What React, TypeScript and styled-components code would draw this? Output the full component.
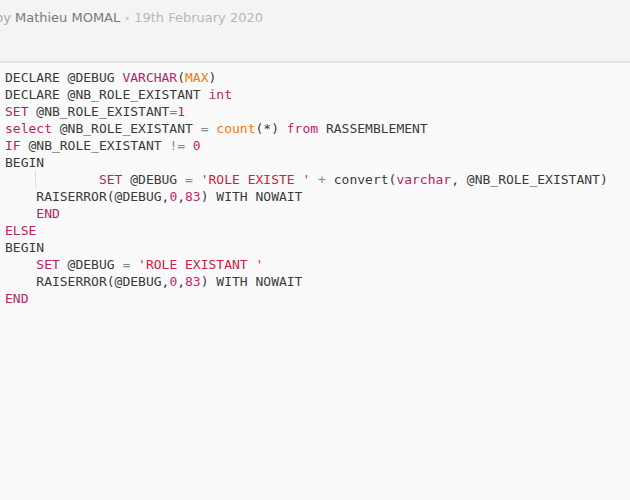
import React from 'react';
import styled, { createGlobalStyle } from 'styled-components';

const GlobalStyle = createGlobalStyle`
  html, body {
    margin: 0;
    padding: 0;
    background: #fafafa;
    overflow: hidden;
  }
`;

type Tok = [string, string?];

// k = keyword, f = function, s = string, n = number, o = operator
const lines: Tok[][] = [
  [['DECLARE @DEBUG '], ['VARCHAR', 'k'], ['('], ['MAX', 'f'], [')']],
  [['DECLARE @NB_ROLE_EXISTANT '], ['int', 'k']],
  [['SET', 'k'], [' @NB_ROLE_EXISTANT'], ['=', 'o'], ['1', 'n']],
  [['select', 'k'], [' @NB_ROLE_EXISTANT '], ['=', 'o'], [' '], ['count', 'f'], ['(*) '], ['from', 'k'], [' RASSEMBLEMENT']],
  [['IF', 'k'], [' @NB_ROLE_EXISTANT '], ['!=', 'o'], [' '], ['0', 'n']],
  [['BEGIN']],
  [['            '], ['SET', 'k'], [' @DEBUG '], ['=', 'o'], [' '], ["'ROLE EXISTE '", 's'], [' '], ['+', 'o'], [' convert('], ['varchar', 'k'], [', @NB_ROLE_EXISTANT)']],
  [['    RAISERROR(@DEBUG,'], ['0', 'n'], [','], ['83', 'n'], [') WITH NOWAIT']],
  [['    '], ['END', 'k']],
  [['ELSE', 'k']],
  [['BEGIN']],
  [['    '], ['SET', 'k'], [' @DEBUG '], ['=', 'o'], [' '], ["'ROLE EXISTANT '", 's']],
  [['    RAISERROR(@DEBUG,'], ['0', 'n'], [','], ['83', 'n'], [') WITH NOWAIT']],
  [['END', 'k']],
];

const tokenColors: Record<string, string> = {
  k: '#b81f66',
  f: '#f27b0c',
  s: '#cf2340',
  n: '#c4246b',
  o: '#7e8c9a',
};

const App = () => {
  return (
    <Page>
      <GlobalStyle />
      <Header>
        <Meta>
          <By>by</By>
          <Author>Mathieu MOMAL</Author>
          <Dot>•</Dot>
          <DateText>19th February 2020</DateText>
        </Meta>
      </Header>
      <Code>
        {lines.map((line, i) => (
          <Line key={i} $guide={i === 6}>
            {line.map(([text, kind], j) =>
              kind ? (
                <Token key={j} $color={tokenColors[kind]}>
                  {text}
                </Token>
              ) : (
                <React.Fragment key={j}>{text}</React.Fragment>
              )
            )}
          </Line>
        ))}
      </Code>
    </Page>
  );
};

export default App;

const Page = styled.div`
  width: 630px;
  height: 500px;
  background: #fafafa;
`;

const Header = styled.div`
  height: 61px;
  background: #f4f4f4;
  border-bottom: 2px solid #e3e3e3;
`;

const Meta = styled.div`
  display: flex;
  align-items: baseline;
  gap: 4px;
  margin-left: -5px;
  padding-top: 9px;
  font-family: 'DejaVu Sans', sans-serif;
  font-size: 13px;
  line-height: 17px;
`;

const By = styled.span`
  color: #a8a8a8;
`;

const Author = styled.span`
  color: #7a7a7a;
`;

const Dot = styled.span`
  color: #c8c8c8;
  font-size: 10px;
`;

const DateText = styled.span`
  color: #b8b8b8;
`;

const Code = styled.pre`
  margin: 0;
  padding: 6px 5px 0 5px;
  font-family: 'DejaVu Sans Mono', monospace;
  font-size: 13px;
  line-height: 17px;
  color: #3a3a3a;
  white-space: pre;
`;

const Line = styled.div<{ $guide?: boolean }>`
  position: relative;
  height: 17px;

  &::before {
    content: '';
    display: ${(p) => (p.$guide ? 'block' : 'none')};
    position: absolute;
    left: 30px;
    top: 0;
    height: 17px;
    border-left: 1px dotted #c8c8c8;
  }
`;

const Token = styled.span<{ $color: string }>`
  color: ${(p) => p.$color};
`;
